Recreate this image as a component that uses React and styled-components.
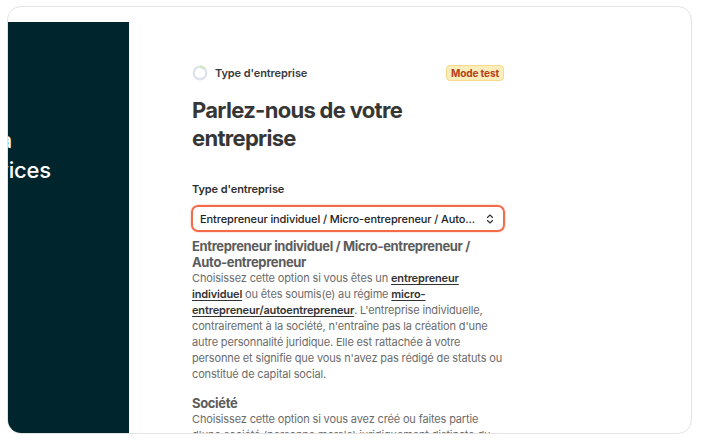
import React from "react";
import styled, { createGlobalStyle } from "styled-components";

const Global = createGlobalStyle`
  html, body { margin: 0; padding: 0; background: #ffffff; }
  body { font-family: Inter, "Noto Sans", sans-serif; -webkit-font-smoothing: antialiased; }
  * { box-sizing: border-box; }
`;

const Card = styled.div`
  margin: 6px 0 0 7px;
  width: 685px;
  height: 428px;
  border: 1px solid #e3e3e3;
  border-radius: 14px;
  overflow: hidden;
  padding-top: 15px;
  display: flex;
  background: #fff;
`;

const Side = styled.aside`
  width: 121px;
  flex: none;
  background: #01252d;
  color: #fff;
  overflow: hidden;
  display: flex;
  flex-direction: column;
  padding-top: 103px;
`;

const SideLine = styled.div`
  width: ${(p) => p.$end}px;
  display: flex;
  justify-content: flex-end;
  white-space: nowrap;
  font-size: 22px;
  line-height: 30px;
  font-weight: 500;
  letter-spacing: -0.2px;
`;

const Main = styled.main`
  flex: 1;
  padding: 43px 0 0 63px;
  overflow: hidden;
`;

const Column = styled.div`
  width: 312px;
  display: flex;
  flex-direction: column;
`;

const TopRow = styled.div`
  display: flex;
  align-items: center;
  height: 16px;
`;

const Step = styled.span`
  margin-left: 7px;
  flex: 1;
  font-size: 11px;
  font-weight: 600;
  color: #3a3a3a;
  letter-spacing: -0.1px;
`;

const Badge = styled.span`
  background: #fdedbb;
  border: 1px solid #f6d98c;
  border-radius: 4px;
  color: #b2411c;
  font-size: 10px;
  font-weight: 700;
  padding: 1px 4px;
  line-height: 12px;
  letter-spacing: -0.1px;
`;

const Title = styled.h1`
  margin: 15px 0 0;
  font-size: 22px;
  line-height: 28px;
  font-weight: 700;
  color: #363636;
  letter-spacing: -0.7px;
`;

const Label = styled.label`
  margin-top: 30px;
  font-size: 11px;
  line-height: 14px;
  font-weight: 600;
  color: #2f2f2f;
  letter-spacing: -0.1px;
`;

const Select = styled.div`
  margin: 9px -1px 0;
  height: 27px;
  border: 2px solid #f26b4a;
  border-radius: 7px;
  display: flex;
  align-items: center;
  padding: 0 7px 0 7px;
  font-size: 11px;
  font-weight: 500;
  color: #222;
  letter-spacing: -0.1px;
  box-shadow: 0 0 0 1px rgba(242, 107, 74, 0.15);
`;

const SelectText = styled.span`
  flex: 1;
  white-space: nowrap;
  overflow: hidden;
`;

const OptTitle = styled.h3`
  margin: 6px 0 0;
  font-size: 13px;
  line-height: 16px;
  font-weight: 700;
  color: #5c5c5c;
  letter-spacing: -0.35px;
`;

const Para = styled.p`
  margin: 0;
  font-size: 11px;
  line-height: 16px;
  color: #6b6b6b;
  letter-spacing: -0.15px;
`;

const Link = styled.a`
  color: #333;
  font-weight: 600;
  text-decoration: underline;
  text-underline-offset: 2px;
`;

const Section = styled.div`
  margin-top: ${(p) => p.$gap || 0}px;
  display: flex;
  flex-direction: column;
`;

const Ring = () => (
  <svg width="16" height="16" viewBox="0 0 16 16">
    <circle cx="8" cy="8" r="6.3" fill="none" stroke="#dfe4ea" strokeWidth="2.4" />
    <path d="M8 1.7 A6.3 6.3 0 0 1 12.5 3.6" fill="none" stroke="#cfe8be" strokeWidth="2.4" />
  </svg>
);

const Chevrons = () => (
  <svg width="12" height="12" viewBox="0 0 24 24" fill="none" stroke="#333" strokeWidth="2.2" strokeLinecap="round" strokeLinejoin="round">
    <path d="m7 15 5 5 5-5" />
    <path d="m7 9 5-5 5 5" />
  </svg>
);

export default function App() {
  return (
    <>
      <Global />
      <Card>
        <Side>
          <SideLine $end={4}>Accédez à la</SideLine>
          <SideLine $end={43}>plateforme de services</SideLine>
        </Side>
        <Main>
          <Column>
            <TopRow>
              <Ring />
              <Step>Type d'entreprise</Step>
              <Badge>Mode test</Badge>
            </TopRow>
            <Title>Parlez-nous de votre entreprise</Title>
            <Label>Type d'entreprise</Label>
            <Select>
              <SelectText>Entrepreneur individuel / Micro-entrepreneur / Auto...</SelectText>
              <Chevrons />
            </Select>
            <Section>
              <OptTitle>Entrepreneur individuel / Micro-entrepreneur / Auto-entrepreneur</OptTitle>
              <Para>
                Choisissez cette option si vous êtes un <Link>entrepreneur individuel</Link> ou êtes soumis(e) au régime{" "}
                <Link>micro-entrepreneur/autoentrepreneur</Link>. L'entreprise individuelle, contrairement à la société,
                n'entraîne pas la création d'une autre personnalité juridique. Elle est rattachée à votre personne et
                signifie que vous n'avez pas rédigé de statuts ou constitué de capital social.
              </Para>
            </Section>
            <Section $gap={7}>
              <OptTitle>Société</OptTitle>
              <Para>
                Choisissez cette option si vous avez créé ou faites partie d'une société (personne morale) juridiquement
                distincte du dirigeant, avec ses propres statuts et son capital social.
              </Para>
            </Section>
          </Column>
        </Main>
      </Card>
    </>
  );
}
